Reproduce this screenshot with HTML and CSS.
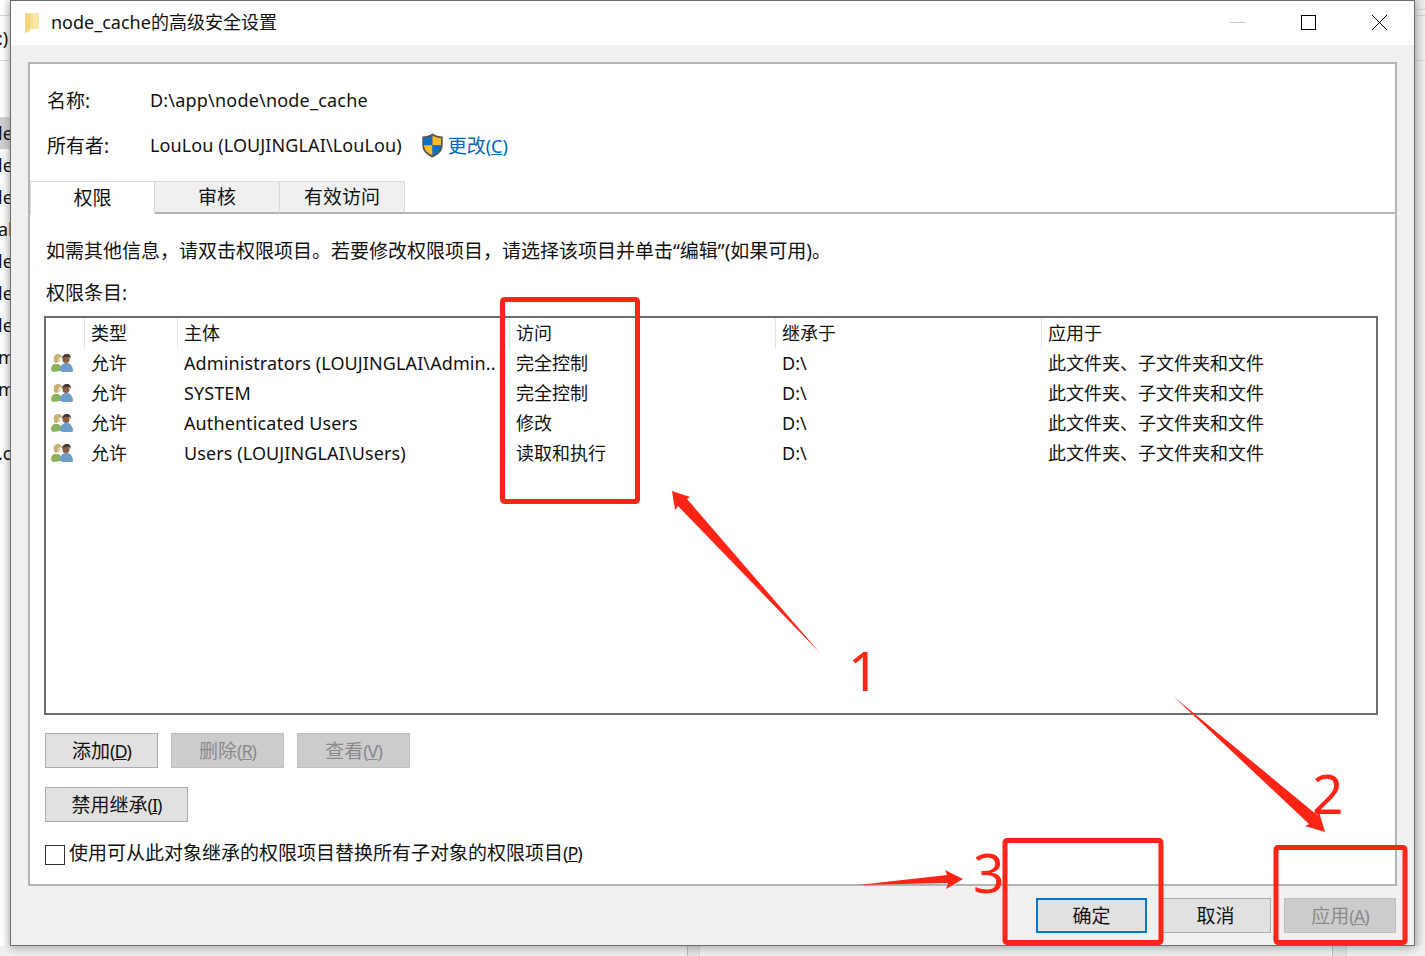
FILE: index.html
```html
<!DOCTYPE html>
<html lang="zh-CN">
<head>
<meta charset="utf-8">
<title>node_cache的高级安全设置</title>
<link rel="stylesheet" href="styles.css">
</head>
<body>
<div class="desktop">
  <div class="backdrop-left">
    <span class="bl bl-paren">:)</span>
    <span class="bl bl-sel">le</span>
    <span class="bl">le</span>
    <span class="bl">le</span>
    <span class="bl">al</span>
    <span class="bl">le</span>
    <span class="bl">le</span>
    <span class="bl">le</span>
    <span class="bl">m</span>
    <span class="bl">m.</span>
    <span class="bl bl-gap">.c</span>
  </div>
  <div class="dialog">
    <header class="titlebar">
      <svg class="folder" width="15" height="21" viewBox="0 0 15 21"><path d="M0 1h3l11 0v16H5z" fill="#fbe5a2"/><path d="M0 1l5 1v17l-5 2z" fill="#f5d680"/><path d="M5 2h3v15H5z" fill="#f9dd90"/></svg>
      <span class="title">node_cache的高级安全设置</span>
      <div class="winbtns">
        <svg width="15" height="15" viewBox="0 0 15 15"><path d="M0 7.500h15" stroke="#c9c9c9" stroke-width="1"/></svg>
        <svg width="15" height="15" viewBox="0 0 15 15"><rect x=".5" y=".5" width="14" height="14" fill="none" stroke="#000"/></svg>
        <svg width="15" height="15" viewBox="0 0 15 15"><path d="M0 0l15 15M15 0L0 15" stroke="#000" fill="none"/></svg>
      </div>
    </header>
    <div class="client">
      <main class="panel">
        <div class="info">
          <div class="info-row"><span class="info-label">名称:</span><span class="info-val">D:\app\node\node_cache</span></div>
          <div class="info-row">
            <span class="info-label">所有者:</span><span class="info-val info-owner">LouLou (LOUJINGLAI\LouLou)</span>
            <svg class="shield" width="23" height="25" viewBox="0 0 22 25"><path d="M11 .5C8 2.500 4.500 3.500 .8 3.500v8.500c0 6 4.200 10 10.200 12.500 6-2.500 10.200-6.500 10.200-12.500V3.500C17.500 3.500 14 2.500 11 .5z" fill="#555"/><path d="M11 2.500v9.700H2.500V5.200C5.800 5 8.500 4 11 2.500z" fill="#0f6fc6"/><path d="M11 2.500c2.500 1.500 5.200 2.500 8.500 2.700v7H11z" fill="#fdb92c"/><path d="M2.500 12.200H11v10C6 20 2.700 17 2.500 12.200z" fill="#fdb92c"/><path d="M11 12.200h8.500c-.2 4.800-3.500 7.800-8.500 10z" fill="#0f6fc6"/></svg>
            <a class="link">更改<span class="hk hk-link">(<u>C</u>)</span></a>
          </div>
        </div>
        <nav class="tabs">
          <span class="tab tab-on">权限</span>
          <span class="tab">审核</span>
          <span class="tab">有效访问</span>
          <span class="tab-rest"></span>
        </nav>
        <div class="body">
          <p class="hint">如需其他信息，请双击权限项目。若要修改权限项目，请选择该项目并单击“编辑”(如果可用)。</p>
          <p class="entries">权限条目:</p>
          <div class="list">
            <div class="row head">
              <span class="c c-icon"></span><span class="c c-type">类型</span><span class="c c-who">主体</span><span class="c c-acc">访问</span><span class="c c-inh">继承于</span><span class="c c-app">应用于</span>
            </div>
            <div class="row">
              <span class="c c-icon"><svg class="users" width="22" height="18" viewBox="0 0 22 18"><use href="#users"/></svg></span><span class="c c-type">允许</span><span class="c c-who">Administrators (LOUJINGLAI\Admin..</span><span class="c c-acc">完全控制</span><span class="c c-inh">D:\</span><span class="c c-app">此文件夹、子文件夹和文件</span>
            </div>
            <div class="row">
              <span class="c c-icon"><svg class="users" width="22" height="18" viewBox="0 0 22 18"><use href="#users"/></svg></span><span class="c c-type">允许</span><span class="c c-who">SYSTEM</span><span class="c c-acc">完全控制</span><span class="c c-inh">D:\</span><span class="c c-app">此文件夹、子文件夹和文件</span>
            </div>
            <div class="row">
              <span class="c c-icon"><svg class="users" width="22" height="18" viewBox="0 0 22 18"><use href="#users"/></svg></span><span class="c c-type">允许</span><span class="c c-who">Authenticated Users</span><span class="c c-acc">修改</span><span class="c c-inh">D:\</span><span class="c c-app">此文件夹、子文件夹和文件</span>
            </div>
            <div class="row">
              <span class="c c-icon"><svg class="users" width="22" height="18" viewBox="0 0 22 18"><use href="#users"/></svg></span><span class="c c-type">允许</span><span class="c c-who">Users (LOUJINGLAI\Users)</span><span class="c c-acc">读取和执行</span><span class="c c-inh">D:\</span><span class="c c-app">此文件夹、子文件夹和文件</span>
            </div>
          </div>
          <div class="actions">
            <button class="btn">添加<span class="hk">(<u>D</u>)</span></button>
            <button class="btn off">删除<span class="hk">(<u>R</u>)</span></button>
            <button class="btn off">查看<span class="hk">(<u>V</u>)</span></button>
          </div>
          <button class="btn wide">禁用继承<span class="hk">(<u>I</u>)</span></button>
          <label class="check"><span class="box"></span><span>使用可从此对象继承的权限项目替换所有子对象的权限项目<span class="hk">(<u>P</u>)</span></span></label>
        </div>
      </main>
      <footer class="footer">
        <button class="btn foot focus">确定</button>
        <button class="btn foot">取消</button>
        <button class="btn foot off">应用<span class="hk">(<u>A</u>)</span></button>
      </footer>
    </div>
  </div>
  <div class="backdrop-right"></div>
  <div class="backdrop-bottom"><i class="bb-a"></i><i class="bb-b"></i></div>

  <svg class="marks" width="1425" height="956" viewBox="0 0 1425 956">
    <defs>
      <g id="users">
        <path d="M0 16c0-3 1-5 3-6h4c1 .5 2 1 3 2v5l-8 1z" fill="#8ab25c"/>
        <circle cx="6.500" cy="5.500" r="3" fill="#e9cfa5"/>
        <path d="M3 7C2 2 4 0 7 0c3 0 4 2 4 4-2-1-4-1-4 1 0 2-1 4-2 4-1 0-2-1-2-2z" fill="#c9b074"/>
        <path d="M9 16c0-4 2-6 5-7h3c3 1 5 4 5 8l-1 1H11z" fill="#6c9dcb"/>
        <circle cx="15" cy="5.500" r="3.500" fill="#8a5e3f"/>
        <path d="M11 5c0-3 2-5 5-5 3 0 4 2 4 5-1-2-2-2-4-2-2 0-4 0-5 2z" fill="#3e3a38"/>
      </g>
    </defs>
    <g fill="none" stroke="#ff2516" stroke-width="5">
      <rect x="502.500" y="299.500" width="135" height="202" rx="2"/>
      <rect x="1005" y="840.500" width="156" height="102" rx="2"/>
      <rect x="1276" y="847.500" width="129" height="95" rx="2"/>
    </g>
    <g fill="#ff2516">
      <path d="M820 653L687 499l3-2-18-6 3 19 3-4z"/>
      <path d="M1173 696l144 119 2-3 6 20-20-6 4-2z"/>
      <path d="M858 885l89-10-2-5 18 9-17 10 2-6z"/>
    </g>
  </svg>
  <span class="num num1">1</span>
  <span class="num num2">2</span>
  <span class="num num3">3</span>
</div>
</body>
</html>
```
FILE: styles.css
```css
* { box-sizing: border-box; }
html, body { margin: 0; height: 100%; }
body {
  font-family: "Noto Sans", "Noto Sans CJK SC", sans-serif;
  font-size: 19px;
  color: #111;
  background: #fff;
}
.desktop {
  position: relative;
  width: 1425px;
  height: 956px;
  overflow: hidden;
  display: grid;
  grid-template-columns: 10px 1405px 10px;
  grid-template-rows: 946px 10px;
}
.backdrop-left {
  display: flex;
  flex-direction: column;
  align-items: flex-start;
  padding-top: 22px;
  overflow: hidden;
  background:
    linear-gradient(#d6d6d6, #d6d6d6) 0 15px / 100% 1px no-repeat,
    linear-gradient(#d6d6d6, #d6d6d6) 0 60px / 100% 1px no-repeat,
    linear-gradient(90deg, #fff 30%, #ececec 100%);
  font-size: 18px;
}
.bl { height: 32px; line-height: 32px; margin-left: -2px; width: 12px; overflow: hidden; white-space: nowrap; }
.bl-paren { margin-bottom: 63px; }
.bl-sel { background: #cfcfcf; }
.bl-gap { margin-top: 32px; }
.backdrop-right {
  background:
    linear-gradient(#cfcfcf, #cfcfcf) 0 9px / 100% 1px no-repeat,
    linear-gradient(#cfcfcf, #cfcfcf) 0 15px / 100% 1px no-repeat,
    linear-gradient(#cfcfcf, #cfcfcf) 0 60px / 100% 1px no-repeat,
    linear-gradient(90deg, #dcdcdc, #f0f0f0);
}
.backdrop-bottom {
  grid-column: 1 / 4;
  background: #f0f0f0;
  display: flex;
  padding-left: 687px;
}
.bb-a, .bb-b {
  display: block;
  width: 13px;
  height: 10px;
  background: #e4e4e4;
  border-left: 1px solid #bdbdbd;
  border-right: 1px solid #dadada;
}
.bb-b { margin-left: 632px; width: 15px; }

.dialog {
  display: flex;
  flex-direction: column;
  border: 1px solid #6d6d6d;
  background: #f0f0f0;
  box-shadow: 0 2px 9px rgba(0,0,0,.3);
  position: relative;
}
.titlebar {
  height: 44px;
  flex: none;
  background: #fff;
  display: flex;
  align-items: center;
  padding: 0 0 2px 14px;
  font-size: 18px;
}
.folder { margin-right: 11px; flex: none; }
.title { flex: 1; white-space: nowrap; margin-bottom: 2px; }
.winbtns { display: flex; align-items: center; gap: 56px; padding-right: 27px; }
.client { flex: 1; display: flex; flex-direction: column; padding: 17px 17px 0 17px; }
.panel {
  height: 824px;
  flex: none;
  background: #fff;
  border: 2px solid #b4b4b4;
  display: flex;
  flex-direction: column;
}
.info { padding: 21px 0 0 17px; height: 117px; }
.info-row { display: flex; align-items: center; height: 30px; margin-bottom: 15px; white-space: nowrap; }
.info-label { width: 103px; }
.info-val { font-size: 18px; letter-spacing: .2px; }
.info-owner { letter-spacing: .1px; }
.shield { margin: 0 4px 0 19px; }
.link { color: #0067c0; }
.hk { font-size: 18px; letter-spacing: -1px; }
.hk-link { letter-spacing: 0; }
.tabs { display: flex; height: 33px; flex: none; }
.tab {
  width: 125px;
  height: 33px;
  background: #f0f0f0;
  border: 1px solid #dadada;
  border-left: 0;
  border-bottom: 2px solid #b4b4b4;
  text-align: center;
  line-height: 30px;
}
.tab-on {
  background: #fff;
  border-left: 1px solid #dadada;
  border-bottom: 0;
  line-height: 32px;
}
.tab-rest { flex: 1; border-bottom: 2px solid #b4b4b4; }
.body { padding: 0 0 0 14px; flex: 1; }
.hint { margin: 22px 0 0 2px; line-height: 30px; white-space: nowrap; }
.entries { margin: 12px 0 0 2px; line-height: 30px; }
.list {
  margin-top: 8px;
  width: 1334px;
  height: 399px;
  border: 2px solid #6d6d6d;
  font-size: 18px;
}
.row { display: flex; height: 30px; align-items: center; white-space: nowrap; }
.c { display: block; padding-left: 7px; height: 100%; line-height: 30px; overflow: hidden; }
.head .c:not(.c-icon) { box-shadow: inset 1px 0 0 #e5e5e5; }
.c-icon { width: 38px; padding: 6px 0 0 5px; }
.c-type { width: 93px; }
.c-who { width: 332px; letter-spacing: .1px; }
.c-acc { width: 266px; }
.c-inh { width: 266px; }
.c-app { flex: 1; }
.users { display: block; }
.actions { display: flex; gap: 13px; margin: 18px 0 0 1px; }
.btn {
  font: inherit;
  color: #111;
  height: 35px;
  width: 113px;
  padding: 0 0 2px;
  background: #e1e1e1;
  border: 1px solid #adadad;
}
.btn.off { background: #cccccc; border-color: #bfbfbf; color: #8a8a8a; }
.wide { display: block; width: 143px; margin: 19px 0 0 1px; }
.check { display: flex; align-items: center; gap: 4px; margin: 12px 0 0 1px; white-space: nowrap; height: 35px; }
.box { width: 20px; height: 20px; border: 1px solid #333; background: #fff; flex: none; margin-top: 7px; }
.footer { display: flex; justify-content: flex-end; gap: 13px; padding: 12px 1px 0 0; }
.foot { width: 111px; }
.foot.off { width: 112px; }
.focus { border: 2px solid #0078d7; }

.marks { position: absolute; left: 0; top: 0; pointer-events: none; }
.num {
  position: absolute;
  font-family: "Noto Sans", sans-serif;
  font-weight: 400;
  font-size: 55px;
  line-height: 60px;
  color: #ff2516;
}
.num1 { left: 848px; top: 640px; }
.num2 { left: 1312px; top: 763px; }
.num3 { left: 973px; top: 842px; }
```
